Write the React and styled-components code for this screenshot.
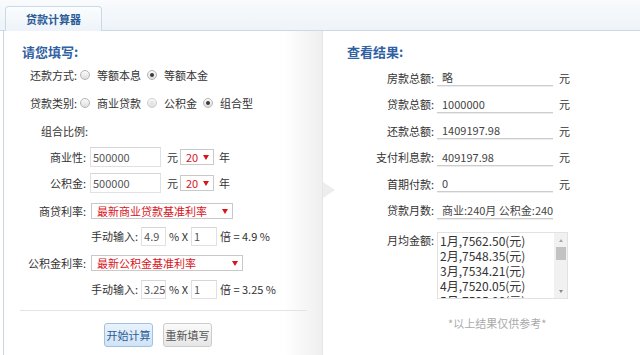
import React from 'react';
import styled, { createGlobalStyle } from 'styled-components';

const GlobalStyle = createGlobalStyle`
  html, body {
    margin: 0;
    padding: 0;
    background: #fff;
  }
  body {
    font-family: "Noto Sans CJK SC", "Microsoft YaHei", sans-serif;
    font-size: 11px;
    color: #333;
  }
  * {
    box-sizing: border-box;
  }
`;

const Page = styled.div`
  width: 640px;
  height: 355px;
  overflow: hidden;
  display: flex;
  flex-direction: column;
`;

const TabBar = styled.div`
  flex: none;
  height: 31px;
  padding-left: 5px;
  display: flex;
  align-items: flex-end;
  background: linear-gradient(#f9fbfd, #eef3f8);
  border-bottom: 1px solid #c9d9e7;
`;

const Tab = styled.div`
  width: 97px;
  height: 25px;
  margin-bottom: -1px;
  border: 1px solid #c9d9e7;
  border-bottom: none;
  border-radius: 4px 4px 0 0;
  background: linear-gradient(#fbfdfe, #edf3f9);
  display: flex;
  align-items: center;
  justify-content: center;
  font-size: 11px;
  font-weight: 700;
  color: #2b5c98;
`;

const Body = styled.div`
  flex: 1;
  display: flex;
`;

const LeftPanel = styled.div`
  width: 320px;
  margin-left: 3px;
  border-left: 1px solid #c9d6e2;
  border-right: 1px solid #e6e6e6;
  background: linear-gradient(to right, #fff 0, #fff 280px, #efefef 318px);
  display: flex;
  flex-direction: column;
`;

const RightPanel = styled.div`
  flex: 1;
  position: relative;
  display: flex;
  flex-direction: column;
  padding-left: 24px;
`;

const PanelArrow = styled.span`
  position: absolute;
  left: 0;
  top: 151px;
  width: 0;
  height: 0;
  border-top: 8px solid transparent;
  border-bottom: 8px solid transparent;
  border-left: 12px solid #ededed;
`;

const Heading = styled.div`
  height: 20px;
  line-height: 20px;
  margin: 11px 0 0 ${({ $left }) => $left || 0}px;
  font-size: 13px;
  font-weight: 700;
  color: #2f61a3;
`;

const Row = styled.div`
  display: flex;
  align-items: center;
  height: ${({ $h }) => $h || 26}px;
  margin-top: ${({ $mt }) => $mt || 0}px;
  padding-left: ${({ $pl }) => $pl || 0}px;
`;

const Label = styled.span`
  width: 86px;
  padding-right: 4px;
  text-align: right;
  white-space: nowrap;
  flex: none;
`;

const PlainLabel = styled.span`
  white-space: nowrap;
  margin-left: ${({ $ml }) => $ml || 0}px;
`;

const RadioOption = styled.span`
  display: flex;
  align-items: center;
  margin-left: ${({ $first }) => ($first ? 3 : 6)}px;
  white-space: nowrap;
`;

const RadioDot = styled.span`
  width: 10px;
  height: 10px;
  margin-right: 7px;
  border-radius: 50%;
  border: 1px solid ${({ $faded }) => ($faded ? '#cfcfcf' : '#b5b5b5')};
  background: linear-gradient(#fbfbfb, #dedede);
  display: flex;
  align-items: center;
  justify-content: center;
  &::after {
    content: '';
    width: 4px;
    height: 4px;
    border-radius: 50%;
    background: ${({ $checked, $faded }) =>
      $checked ? '#3a3a3a' : $faded ? '#e4e4e4' : 'transparent'};
  }
`;

const TextInput = styled.input`
  width: ${({ $w }) => $w}px;
  height: ${({ $h }) => $h || 20}px;
  margin-left: ${({ $ml }) => $ml || 0}px;
  padding: 0 0 0 2px;
  border: 1px solid #e1e1e1;
  border-top-color: #d6d6d6;
  background: #fff;
  font: inherit;
  font-size: 11px;
  color: #555;
  outline: none;
  flex: none;
`;

const Unit = styled.span`
  margin-left: ${({ $ml }) => $ml || 0}px;
  white-space: nowrap;
`;

const SelectBox = styled.span`
  width: ${({ $w }) => $w}px;
  height: 16px;
  margin-left: ${({ $ml }) => $ml || 0}px;
  padding: 0 4px 0 5px;
  border: 1px solid #c9c9c9;
  background: #fff;
  display: flex;
  align-items: center;
  justify-content: space-between;
  color: #d8141c;
  white-space: nowrap;
  flex: none;
`;

const Caret = styled.span`
  width: 0;
  height: 0;
  border-left: 3px solid transparent;
  border-right: 3px solid transparent;
  border-top: 5px solid #d8141c;
`;

const Divider = styled.div`
  height: 1px;
  margin: 9px 15px 0 16px;
  background: #e4e4e4;
`;

const ButtonRow = styled.div`
  display: flex;
  gap: 10px;
  margin: 12px 0 0 100px;
`;

const Button = styled.button`
  height: 24px;
  width: ${({ $w }) => $w}px;
  padding: 0;
  border-radius: 3px;
  font: inherit;
  font-size: 11px;
  border: 1px solid ${({ $primary }) => ($primary ? '#9fc2e3' : '#cccccc')};
  background: ${({ $primary }) =>
    $primary
      ? 'linear-gradient(#eaf3fc, #cfe3f5)'
      : 'linear-gradient(#fafafa, #e6e6e6)'};
  color: ${({ $primary }) => ($primary ? '#2b5c98' : '#555')};
`;

const ResultList = styled.div`
  margin-top: 2.5px;
`;

const ResultRow = styled.div`
  display: flex;
  align-items: center;
  height: 26.5px;
`;

const ResultLabel = styled.span`
  width: 87px;
  margin-right: 3px;
  flex: none;
  text-align: right;
  white-space: nowrap;
`;

const ResultValue = styled.span`
  width: 116px;
  height: 17px;
  line-height: 16px;
  padding-left: 5px;
  border-bottom: 1px solid #cdcdcd;
  box-shadow: 0 1px 0 #ededed;
  color: #444;
  white-space: nowrap;
  overflow: hidden;
  flex: none;
`;

const MonthRow = styled.div`
  display: flex;
  align-items: flex-start;
  margin-top: 8.5px;
`;

const MonthLabel = styled(ResultLabel)`
  line-height: 16px;
`;

const ListBox = styled.div`
  width: 131px;
  height: 67px;
  border: 1px solid #e2e2e2;
  display: flex;
  flex: none;
  overflow: hidden;
`;

const ListLines = styled.div`
  flex: 1;
  padding-left: 2px;
  font-size: 12px;
  line-height: 15px;
  color: #333;
  white-space: nowrap;
  overflow: hidden;
`;

const ScrollTrack = styled.div`
  width: 13px;
  flex: none;
  background: #f1f1f1;
  display: flex;
  flex-direction: column;
  align-items: center;
  padding: 6px 0 5px;
`;

const ScrollArrow = styled.span`
  width: 0;
  height: 0;
  border-left: 2.5px solid transparent;
  border-right: 2.5px solid transparent;
  ${({ $down }) =>
    $down ? 'border-top: 3px solid #8a8a8a;' : 'border-bottom: 3px solid #a8a8a8;'}
`;

const ScrollThumb = styled.span`
  width: 10px;
  height: 13px;
  margin-top: 5px;
  background: #c2c2c2;
`;

const ScrollSpacer = styled.span`
  flex: 1;
`;

const Note = styled.div`
  margin: 16px 0 0 101px;
  height: 16px;
  line-height: 16px;
  color: #aaa;
  font-size: 11px;
`;

const Radio = ({ checked, faded, first, children }) => (
  <RadioOption $first={first}>
    <RadioDot $checked={checked} $faded={faded} />
    {children}
  </RadioOption>
);

// 等额本金: 商业 50 万 4.9%, 公积金 50 万 3.25%, 240 期, 分别四舍五入后相加
const monthly = Array.from({ length: 5 }, (_, i) => {
  const principal = 500000 / 240;
  const left = 500000 - principal * i;
  const biz = Math.round((principal + (left * 0.049) / 12) * 100) / 100;
  const fund = Math.round((principal + (left * 0.0325) / 12) * 100) / 100;
  return `${i + 1}月,${(biz + fund).toFixed(2)}(元)`;
});

const results = [
  ['房款总额:', '略'],
  ['贷款总额:', '1000000'],
  ['还款总额:', '1409197.98'],
  ['支付利息款:', '409197.98'],
  ['首期付款:', '0'],
  ['贷款月数:', '商业:240月 公积金:240月', true],
];

export default function App() {
  return (
    <>
      <GlobalStyle />
      <Page>
        <TabBar>
          <Tab>贷款计算器</Tab>
        </TabBar>
        <Body>
          <LeftPanel>
            <Heading $left={18}>请您填写:</Heading>
            <Row $pl={26}>
              <PlainLabel>还款方式:</PlainLabel>
              <Radio first>等额本息</Radio>
              <Radio checked>等额本金</Radio>
            </Row>
            <Row $pl={26} $mt={2}>
              <PlainLabel>贷款类别:</PlainLabel>
              <Radio first>商业贷款</Radio>
              <Radio faded>公积金</Radio>
              <Radio checked>组合型</Radio>
            </Row>
            <Row $mt={2}>
              <PlainLabel $ml={37}>组合比例:</PlainLabel>
            </Row>
            <Row>
              <Label>商业性:</Label>
              <TextInput $w={71} defaultValue="500000" />
              <Unit $ml={6}>元</Unit>
              <SelectBox $w={34} $ml={2}>
                20 <Caret />
              </SelectBox>
              <Unit $ml={5}>年</Unit>
            </Row>
            <Row>
              <Label>公积金:</Label>
              <TextInput $w={71} defaultValue="500000" />
              <Unit $ml={6}>元</Unit>
              <SelectBox $w={34} $ml={2}>
                20 <Caret />
              </SelectBox>
              <Unit $ml={5}>年</Unit>
            </Row>
            <Row $mt={2}>
              <Label>商贷利率:</Label>
              <SelectBox $w={142} $ml={1}>
                最新商业贷款基准利率 <Caret />
              </SelectBox>
            </Row>
            <Row $h={24}>
              <PlainLabel $ml={87}>手动输入:</PlainLabel>
              <TextInput $w={25} $h={19} $ml={3} defaultValue="4.9" />
              <Unit $ml={3}>% X</Unit>
              <TextInput $w={26} $h={19} $ml={3} defaultValue="1" />
              <Unit $ml={3}>倍 = 4.9 %</Unit>
            </Row>
            <Row $mt={2}>
              <Label>公积金利率:</Label>
              <SelectBox $w={152} $ml={1}>
                最新公积金基准利率 <Caret />
              </SelectBox>
            </Row>
            <Row $h={24} $mt={1}>
              <PlainLabel $ml={87}>手动输入:</PlainLabel>
              <TextInput $w={25} $h={19} $ml={3} defaultValue="3.25" />
              <Unit $ml={3}>% X</Unit>
              <TextInput $w={26} $h={19} $ml={3} defaultValue="1" />
              <Unit $ml={3}>倍 = 3.25 %</Unit>
            </Row>
            <Divider />
            <ButtonRow>
              <Button $primary $w={49}>开始计算</Button>
              <Button $w={49}>重新填写</Button>
            </ButtonRow>
          </LeftPanel>
          <RightPanel>
            <PanelArrow />
            <Heading>查看结果:</Heading>
            <ResultList>
              {results.map(([label, value, noUnit]) => (
                <ResultRow key={label}>
                  <ResultLabel>{label}</ResultLabel>
                  <ResultValue>{value}</ResultValue>
                  {!noUnit && <Unit $ml={6}>元</Unit>}
                </ResultRow>
              ))}
            </ResultList>
            <MonthRow>
              <MonthLabel>月均金额:</MonthLabel>
              <ListBox>
                <ListLines>
                  {monthly.map((line) => (
                    <div key={line}>{line}</div>
                  ))}
                </ListLines>
                <ScrollTrack>
                  <ScrollArrow />
                  <ScrollThumb />
                  <ScrollSpacer />
                  <ScrollArrow $down />
                </ScrollTrack>
              </ListBox>
            </MonthRow>
            <Note>*以上结果仅供参考*</Note>
          </RightPanel>
        </Body>
      </Page>
    </>
  );
}
